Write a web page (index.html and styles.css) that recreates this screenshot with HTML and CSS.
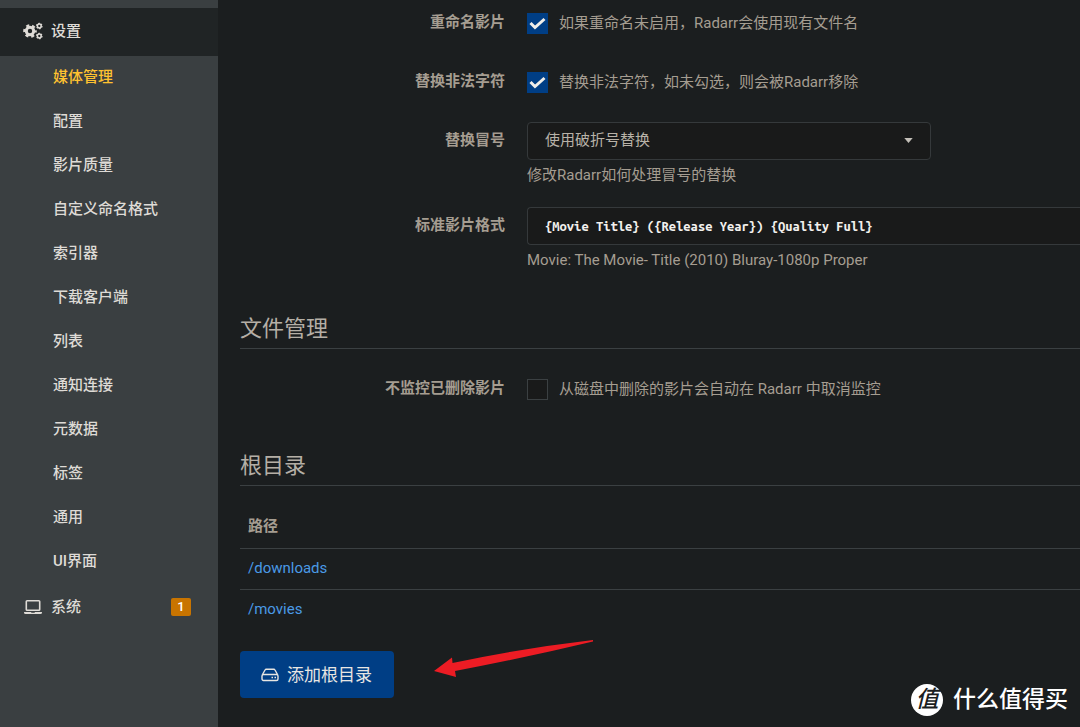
FILE: index.html
```
<!DOCTYPE html>
<html lang="zh-CN">
<head>
    <meta charset="UTF-8">
    <meta name="viewport" content="width=device-width, initial-scale=1.0">
    <title>媒体管理 - Radarr</title>
    <link rel="stylesheet" href="styles.css">
</head>
<body>

    <nav class="sidebar">
        <a href="#" class="menu-item active">
            <svg class="menu-icon" viewBox="0 0 20 18" fill="none" stroke="currentColor">
                <circle cx="7" cy="9" r="3.7" stroke-width="3"/>
                <circle cx="7" cy="9" r="5.6" stroke-width="2.4" stroke-dasharray="3 2.864" stroke-dashoffset="1.5"/>
                <circle cx="16.300" cy="4" r="1.900" stroke-width="1.500"/>
                <circle cx="16.300" cy="4" r="2.700" stroke-width="1.200" stroke-dasharray="1.500 1.327"/>
                <circle cx="16.300" cy="14" r="1.900" stroke-width="1.500"/>
                <circle cx="16.300" cy="14" r="2.700" stroke-width="1.200" stroke-dasharray="1.500 1.327"/>
            </svg>
            <span>设置</span>
        </a>
        <div class="submenu">
            <a href="#" class="submenu-item selected">媒体管理</a>
            <a href="#" class="submenu-item">配置</a>
            <a href="#" class="submenu-item">影片质量</a>
            <a href="#" class="submenu-item">自定义命名格式</a>
            <a href="#" class="submenu-item">索引器</a>
            <a href="#" class="submenu-item">下载客户端</a>
            <a href="#" class="submenu-item">列表</a>
            <a href="#" class="submenu-item">通知连接</a>
            <a href="#" class="submenu-item">元数据</a>
            <a href="#" class="submenu-item">标签</a>
            <a href="#" class="submenu-item">通用</a>
            <a href="#" class="submenu-item">UI界面</a>
        </div>
        <a href="#" class="menu-item">
            <svg class="menu-icon" viewBox="0 0 20 18" fill="none" stroke="currentColor">
                <rect x="3.3" y="2.8" width="13.4" height="9.4" rx="0.8" stroke-width="1.6"/>
                <path d="M1 14h7l.5.8h3l.5-.8h7v.5q0 1.500-1.500 1.500h-15Q1 16 1 14.500z" fill="currentColor" stroke="none"/>
            </svg>
            <span>系统</span>
            <span class="badge">1</span>
        </a>
    </nav>

    <main class="content">
        <form>
            <div class="form-group">
                <label class="form-label" for="rename">重命名影片</label>
                <div class="check-row">
                    <input type="checkbox" id="rename" class="checkbox" checked>
                    <label for="rename">如果重命名未启用，Radarr会使用现有文件名</label>
                </div>
            </div>
            <div class="form-group">
                <label class="form-label" for="illegal">替换非法字符</label>
                <div class="check-row">
                    <input type="checkbox" id="illegal" class="checkbox" checked>
                    <label for="illegal">替换非法字符，如未勾选，则会被Radarr移除</label>
                </div>
            </div>
            <div class="form-group">
                <label class="form-label" for="colon">替换冒号</label>
                <div>
                    <div class="select-wrap">
                        <select id="colon" class="select">
                            <option>使用破折号替换</option>
                        </select>
                        <svg class="caret" viewBox="0 0 10 6"><path d="M0 0h10L5 6z" fill="currentColor"/></svg>
                    </div>
                    <p class="help">修改Radarr如何处理冒号的替换</p>
                </div>
            </div>
            <div class="form-group">
                <label class="form-label" for="format">标准影片格式</label>
                <div>
                    <input type="text" id="format" class="text-input" value="{Movie Title} ({Release Year}) {Quality Full}">
                    <p class="help">Movie: The Movie- Title (2010) Bluray-1080p Proper</p>
                </div>
            </div>

            <h2 class="legend">文件管理</h2>
            <div class="form-group">
                <label class="form-label" for="unmonitor">不监控已删除影片</label>
                <div class="check-row">
                    <input type="checkbox" id="unmonitor" class="checkbox">
                    <label for="unmonitor">从磁盘中删除的影片会自动在 Radarr 中取消监控</label>
                </div>
            </div>

            <h2 class="legend">根目录</h2>
            <table class="folders">
                <thead>
                    <tr><th>路径</th></tr>
                </thead>
                <tbody>
                    <tr><td><a href="#">/downloads</a></td></tr>
                    <tr><td><a href="#">/movies</a></td></tr>
                </tbody>
            </table>

            <button type="button" class="add-button">
                <svg class="drive-icon" viewBox="0 0 18 14" fill="none" stroke="currentColor" stroke-width="1.4">
                    <path d="M1.500 6.500 4 2Q4.400 1.200 5.300 1.200h7.400q.9 0 1.300.8l2.500 4.500"/>
                    <rect x="1" y="6.500" width="16" height="6" rx="1.500"/>
                    <path d="M10.500 9.500h1.500M13.500 9.500H15"/>
                </svg>
                <span>添加根目录</span>
            </button>
        </form>
    </main>

    <!-- pointer to the add button -->
    <svg class="arrow" viewBox="0 0 160 40">
        <path d="M0 31 18 17.500 18.500 23Q90 8 159 0v1.500Q90 18 21 31L22 37z" fill="#ec1c24"/>
    </svg>

    <div class="watermark">
        <span class="watermark-logo">值</span>
        <span>什么值得买</span>
    </div>

</body>
</html>
```

FILE: styles.css
```
* {
    box-sizing: border-box;
}

body {
    margin: 0;
    display: flex;
    min-height: 100vh;
    position: relative;
    overflow: hidden;
    background-color: #1b1e1f;
    color: #a59d91;
    font-family: Roboto, "Noto Sans CJK SC", sans-serif;
    font-size: 15px;
    line-height: 22px;
}

a {
    text-decoration: none;
}

/* Sidebar */

.sidebar {
    flex: 0 0 218px;
    padding-top: 8px;
    background-color: #3a3f41;
}

.menu-item {
    display: flex;
    align-items: center;
    height: 48px;
    padding: 0 27px 2px 23px;
    color: #dedbd6;
    font-weight: 500;
}

.menu-item.active {
    background-color: #202425;
}

.menu-icon {
    width: 20px;
    height: 18px;
    margin-right: 8px;
}

.submenu-item {
    display: block;
    padding: 10px 0 12px 53px;
    color: #dedbd6;
    font-weight: 500;
}

.submenu-item.selected {
    color: #ffc230;
}

.badge {
    margin-left: auto;
    width: 20px;
    border-radius: 2px;
    background-color: #c87400;
    color: #fff;
    font-size: 13px;
    line-height: 18px;
    text-align: center;
}

/* Settings form */

.content {
    flex: 1;
    min-width: 0;
    padding: 4px 0 20px 22px;
}

.form-group {
    display: grid;
    grid-template-columns: 265px 1fr;
    column-gap: 22px;
    margin-bottom: 21px;
}

.form-label {
    padding-top: 7px;
    font-weight: bold;
    text-align: right;
}

.check-row {
    display: flex;
    align-items: center;
    gap: 11px;
    height: 38px;
}

.checkbox {
    appearance: none;
    width: 21px;
    height: 21px;
    margin: 0;
    border: 1px solid #3b4042;
    background-color: #191a1a;
}

.checkbox:checked {
    border-color: #003e85;
    background: #003e85 url("data:image/svg+xml,%3Csvg xmlns='http://www.w3.org/2000/svg' viewBox='0 0 19 19'%3E%3Cpath d='M2.500 9l4.500 4.500 9.500-8.500' fill='none' stroke='%23f0eee9' stroke-width='3'/%3E%3C/svg%3E");
}

.select-wrap {
    position: relative;
    max-width: 404px;
}

.select,
.text-input {
    display: block;
    width: 100%;
    height: 38px;
    padding: 0 17px;
    border: 1px solid #35393b;
    border-radius: 4px;
    background-color: #191a1a;
}

.select {
    appearance: none;
    padding-bottom: 2px;
    color: #b8b2a8;
    font: inherit;
}

.caret {
    position: absolute;
    top: 16px;
    right: 18px;
    width: 9px;
    height: 5px;
    color: #c4c0b9;
    pointer-events: none;
}

.text-input {
    border-right: 0;
    border-radius: 4px 0 0 4px;
    color: #f2f0ed;
    font-family: "Ubuntu Mono", "DejaVu Sans Mono", monospace;
    font-size: 13px;
    font-weight: bold;
}

.help {
    margin: 4px 0 0;
}

.legend {
    margin: 41px 0 21px;
    padding-bottom: 2px;
    border-bottom: 1px solid #3b4042;
    color: #b5afa6;
    font-size: 22px;
    font-weight: normal;
    line-height: 34px;
}

/* Root folders */

.folders {
    width: 100%;
    border-collapse: collapse;
}

.folders th,
.folders td {
    height: 41px;
    padding: 0 8px 2px;
    text-align: left;
}

.folders td {
    border-top: 1px solid #3b4042;
}

.folders a {
    color: #4a9ae6;
}

.add-button {
    display: flex;
    align-items: center;
    gap: 8px;
    height: 47px;
    margin-top: 21px;
    padding: 0 22px 0 21px;
    border: 0;
    border-radius: 4px;
    background-color: #003e85;
    color: #e8e6e3;
    font: inherit;
    font-size: 17px;
}

.drive-icon {
    width: 18px;
    height: 14px;
}

/* Overlays */

.arrow {
    position: absolute;
    left: 434px;
    top: 640px;
    width: 160px;
    height: 40px;
}

.watermark {
    position: absolute;
    right: 12px;
    bottom: 11px;
    display: flex;
    align-items: center;
    gap: 10px;
    color: #fff;
    font-size: 23px;
    font-weight: 500;
    line-height: 32px;
}

.watermark-logo {
    width: 32px;
    border-radius: 50%;
    background-color: #fff;
    color: #1b1e1f;
    font-style: italic;
    text-align: center;
}
```
